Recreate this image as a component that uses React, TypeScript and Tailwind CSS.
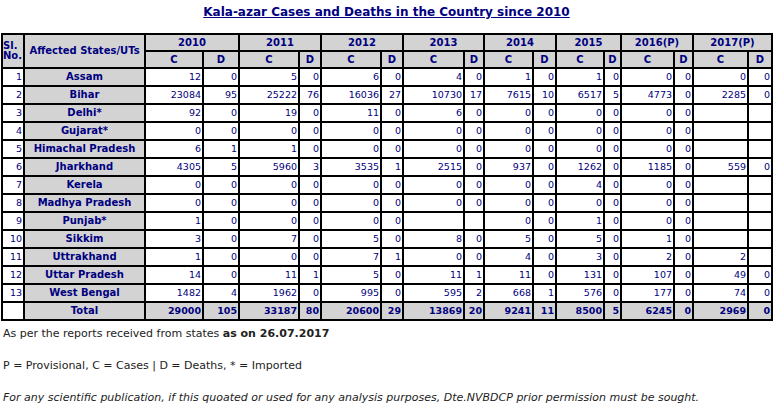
import React from "react";

type Row = { sl: string; name: string; v: (string | number)[] };

const rows: Row[] = [
  { sl: "1", name: "Assam", v: [12, 0, 5, 0, 6, 0, 4, 0, 1, 0, 1, 0, 0, 0, 0, 0] },
  { sl: "2", name: "Bihar", v: [23084, 95, 25222, 76, 16036, 27, 10730, 17, 7615, 10, 6517, 5, 4773, 0, 2285, 0] },
  { sl: "3", name: "Delhi*", v: [92, 0, 19, 0, 11, 0, 6, 0, 0, 0, 0, 0, 0, 0, "", ""] },
  { sl: "4", name: "Gujarat*", v: [0, 0, 0, 0, 0, 0, 0, 0, 0, 0, 0, 0, 0, 0, "", ""] },
  { sl: "5", name: "Himachal Pradesh", v: [6, 1, 1, 0, 0, 0, 0, 0, 0, 0, 0, 0, 0, 0, "", ""] },
  { sl: "6", name: "Jharkhand", v: [4305, 5, 5960, 3, 3535, 1, 2515, 0, 937, 0, 1262, 0, 1185, 0, 559, 0] },
  { sl: "7", name: "Kerela", v: [0, 0, 0, 0, 0, 0, 0, 0, 0, 0, 4, 0, 0, 0, "", ""] },
  { sl: "8", name: "Madhya Pradesh", v: [0, 0, 0, 0, 0, 0, 0, 0, 0, 0, 0, 0, 0, 0, "", ""] },
  { sl: "9", name: "Punjab*", v: [1, 0, 0, 0, 0, 0, "", "", 0, 0, 1, 0, 0, 0, "", ""] },
  { sl: "10", name: "Sikkim", v: [3, 0, 7, 0, 5, 0, 8, 0, 5, 0, 5, 0, 1, 0, "", ""] },
  { sl: "11", name: "Uttrakhand", v: [1, 0, 0, 0, 7, 1, 0, 0, 4, 0, 3, 0, 2, 0, 2, ""] },
  { sl: "12", name: "Uttar Pradesh", v: [14, 0, 11, 1, 5, 0, 11, 1, 11, 0, 131, 0, 107, 0, 49, 0] },
  { sl: "13", name: "West Bengal", v: [1482, 4, 1962, 0, 995, 0, 595, 2, 668, 1, 576, 0, 177, 0, 74, 0] },
];

const total = [29000, 105, 33187, 80, 20600, 29, 13869, 20, 9241, 11, 8500, 5, 6245, 0, 2969, 0];

const years = ["2010", "2011", "2012", "2013", "2014", "2015", "2016(P)", "2017(P)"];

const th =
  "border border-black bg-[#d3d3d3] text-[#000080] font-bold text-center text-[10px] leading-none p-0";
const num = "border border-black bg-white text-[#000080] text-right text-[9.5px] leading-none p-0 pr-[1px]";
const tot = "border border-black bg-[#d3d3d3] text-[#000080] font-bold text-right text-[9.5px] leading-none p-0 pr-[1px]";

export default function App() {
  return (
    <div className="w-[773px] h-[406px] bg-white font-['DejaVu_Sans',sans-serif] text-black overflow-hidden">
      <div className="h-[33px] pt-[3px] text-center leading-[16px]">
        <span className="text-[12px] font-bold text-[#000080] underline leading-[16px]">
          Kala-azar Cases and Deaths in the Country since 2010
        </span>
      </div>
      <table className="ml-px w-[772px] table-fixed border-separate border-spacing-0 border border-black">
        <colgroup>
          <col className="w-[22px]" />
          <col className="w-[121px]" />
          <col className="w-[58px]" />
          <col className="w-[36px]" />
          <col className="w-[60px]" />
          <col className="w-[22px]" />
          <col className="w-[60px]" />
          <col className="w-[22px]" />
          <col className="w-[61px]" />
          <col className="w-[20px]" />
          <col className="w-[49px]" />
          <col className="w-[23px]" />
          <col className="w-[48px]" />
          <col className="w-[17px]" />
          <col className="w-[53px]" />
          <col className="w-[19px]" />
          <col className="w-[55px]" />
          <col className="w-[24px]" />
        </colgroup>
        <thead>
          <tr className="h-[17px]">
            <th rowSpan={2} className={th + " text-left align-middle"}>
              Sl.
              <br />
              No.
            </th>
            <th rowSpan={2} className={th}>
              Affected States/UTs
            </th>
            {years.map((y) => (
              <th key={y} colSpan={2} className={th}>
                {y}
              </th>
            ))}
          </tr>
          <tr className="h-[17px]">
            {years.map((y) => (
              <React.Fragment key={y}>
                <th className={th}>C</th>
                <th className={th}>D</th>
              </React.Fragment>
            ))}
          </tr>
        </thead>
        <tbody>
          {rows.map((r) => (
            <tr key={r.sl} className="h-[18px]">
              <td className={num}>{r.sl}</td>
              <td className={th}>{r.name}</td>
              {r.v.map((x, i) => (
                <td key={i} className={num}>
                  {x}
                </td>
              ))}
            </tr>
          ))}
          <tr className="h-[18px]">
            <td className={num}></td>
            <td className={th}>Total</td>
            {total.map((x, i) => (
              <td key={i} className={tot}>
                {x}
              </td>
            ))}
          </tr>
        </tbody>
      </table>
      <div className="pl-[3px] text-[11px] leading-[16px] text-[#222]">
        <p className="mt-[5px]">
          As per the reports received from states <b>as on 26.07.2017</b>
        </p>
        <p className="mt-[16px]">P = Provisional, C = Cases | D = Deaths, * = Imported</p>
        <p className="mt-[16px] italic">
          For any scientific publication, if this quoated or used for any analysis purposes, Dte.NVBDCP prior
          permission must be sought.
        </p>
      </div>
    </div>
  );
}
